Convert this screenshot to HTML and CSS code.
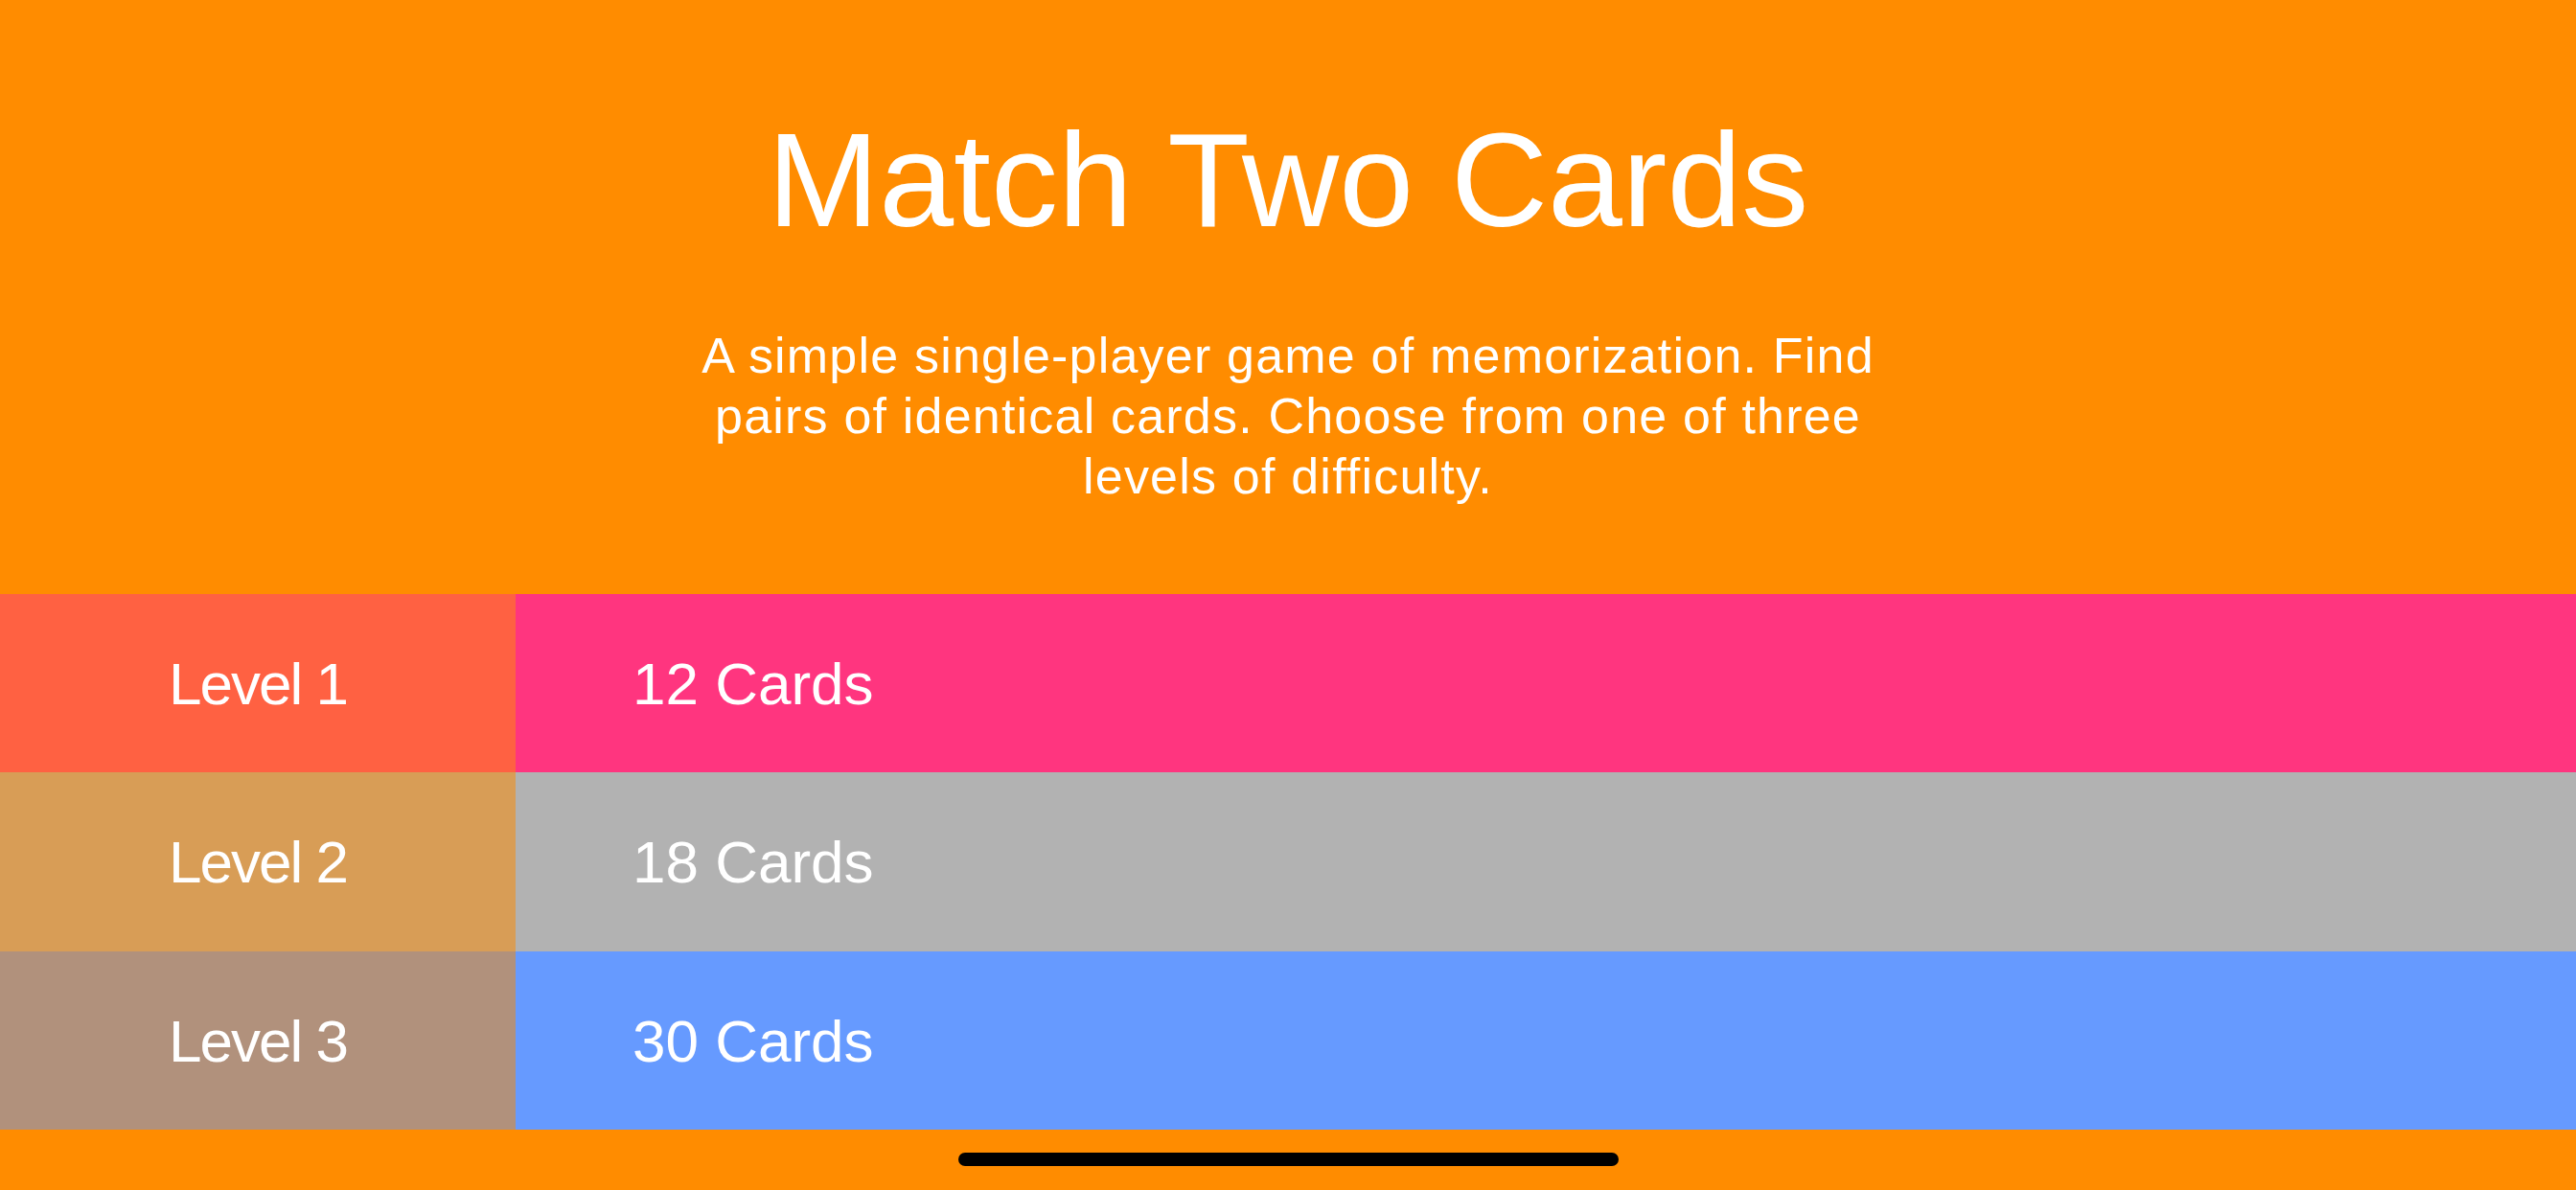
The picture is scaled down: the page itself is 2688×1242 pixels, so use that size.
FILE: index.html
```html
<!DOCTYPE html>
<html>
<head>
    <title>Match Two Cards</title>
    <link rel="stylesheet" href="styles.css">
</head>
<body>
    <div class="screen">
        <div class="header">
            <h1 class="title">Match Two Cards</h1>
            <p class="intro">A simple single-player game of memorization. Find pairs of identical cards. Choose from one of three levels of difficulty.</p>
        </div>
        <div class="levels">
            <div class="level level-1">
                <div class="level-name">Level 1</div>
                <div class="level-cards">12 Cards</div>
            </div>
            <div class="level level-2">
                <div class="level-name">Level 2</div>
                <div class="level-cards">18 Cards</div>
            </div>
            <div class="level level-3">
                <div class="level-name">Level 3</div>
                <div class="level-cards">30 Cards</div>
            </div>
        </div>
        <div class="footer">
            <div class="home-bar"></div>
        </div>
    </div>
</body>
</html>
```

FILE: styles.css
```css
body {
    margin: 0;
    font-family: "Liberation Sans", Arial, sans-serif;
    background: #ff8c00;
    color: #fff;
}
.screen {
    height: 1242px;
    display: flex;
    flex-direction: column;
}
.header {
    height: 620px;
    box-sizing: border-box;
    padding-top: 118px;
    text-align: center;
}
.title {
    margin: 0;
    font-size: 140px;
    font-weight: normal;
    line-height: 140px;
}
.intro {
    margin: 82px auto 0;
    max-width: 1260px;
    font-size: 52px;
    line-height: 63px;
    letter-spacing: 1.2px;
}
.levels {
    display: grid;
    grid-template-rows: 186px 187px 186px;
}
.level {
    display: grid;
    grid-template-columns: 538px 1fr;
    font-size: 62px;
}
.level-name {
    display: flex;
    align-items: center;
    justify-content: center;
    letter-spacing: -2px;
}
.level-cards {
    display: flex;
    align-items: center;
    padding-left: 122px;
}
.level-1 .level-name { background: #ff6142; }
.level-1 .level-cards { background: #ff357f; }
.level-2 .level-name { background: #d89d56; }
.level-2 .level-cards { background: #b2b2b2; }
.level-3 .level-name { background: #b1917c; }
.level-3 .level-cards { background: #669aff; }
.footer {
    flex: 1;
    padding-top: 24px;
}
.home-bar {
    width: 689px;
    height: 14px;
    margin: 0 auto;
    border-radius: 7px;
    background: #000;
}
```
